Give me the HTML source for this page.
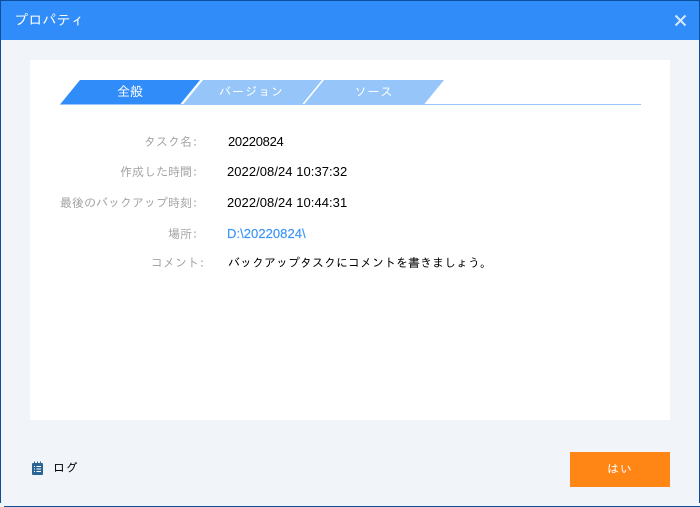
<!DOCTYPE html>
<html lang="ja">
<head>
<meta charset="utf-8">
<style>
html,body{margin:0;padding:0;width:700px;height:507px;overflow:hidden;background:#f1f5fa}
body{position:relative;font-family:"Liberation Sans","IPAGothic",sans-serif}
div,svg{position:absolute}
.t{white-space:nowrap;line-height:16px;height:16px}
.l{color:#a3a3a3;font-size:12px;text-align:right;width:190px;left:8px;font-family:"IPAGothic","Liberation Sans",sans-serif}
.v{color:#000;font-size:13px;left:227px;letter-spacing:.05px}
.j{font-family:"IPAGothic","Liberation Sans",sans-serif;font-size:12px}
</style>
</head>
<body>
<div style="left:0;top:0;width:700px;height:1px;background:#0b4f9c"></div>
<div style="left:0;top:0;width:1px;height:503px;background:#0b4f9c"></div>
<div style="left:699px;top:0;width:1px;height:503px;background:#0b4f9c"></div>
<div style="left:4px;top:506px;width:696px;height:1px;background:#0b4f9c"></div>
<div style="left:1px;top:1px;width:698px;height:39px;background:#308cf9"></div>
<div class="t j" style="left:14px;top:12px;font-size:14px;color:#fff;line-height:16px;letter-spacing:.2px">プロパティ</div>
<svg style="left:674px;top:14px" width="13" height="13" viewBox="0 0 13 13"><path d="M1.5 1.5L11.5 11.5M11.5 1.5L1.5 11.5" stroke="#d6e8fd" stroke-width="2" fill="none"/></svg>

<div style="left:30px;top:60px;width:640px;height:360px;background:#fff"></div>

<svg style="left:0;top:0" width="700" height="120">
<polygon points="60,104.5 80,80 200,80 180,104.5" fill="#308cf9"/>
<polygon points="183,104.5 203,80 322,80 302,104.5" fill="#96c5fa"/>
<polygon points="304,104.5 324,80 444,80 424,104.5" fill="#96c5fa"/>
<rect x="60" y="104" width="581" height="1" fill="#96c5fa"/>
</svg>
<div class="t j" style="left:60px;width:140px;top:84px;text-align:center;color:#fff;font-size:13px">全般</div>
<div class="t j" style="left:182px;width:139px;top:84px;text-align:center;color:#fff;letter-spacing:1px">バージョン</div>
<div class="t j" style="left:304px;width:140px;top:84px;text-align:center;color:#fff;letter-spacing:1px">ソース</div>

<div class="t l" style="top:134px">タスク名:</div>
<div class="t l" style="top:164px">作成した時間:</div>
<div class="t l" style="top:195px">最後のバックアップ時刻:</div>
<div class="t l" style="top:226px">場所:</div>
<div class="t l" style="top:255px;left:15px">コメント:</div>

<div class="t v" style="top:134px;left:228px;letter-spacing:-.3px">20220824</div>
<div class="t v" style="top:164px">2022/08/24 10:37:32</div>
<div class="t v" style="top:195px">2022/08/24 10:44:31</div>
<div class="t v" style="top:226px;color:#3f96f8;-webkit-text-stroke:.2px #3f96f8">D:\20220824\</div>
<div class="t j" style="top:255px;left:228px;color:#000">バックアップタスクにコメントを書きましょう。</div>

<svg style="left:31px;top:461px" width="13" height="15" viewBox="0 0 13 15">
<rect x="1" y="2" width="11" height="12" rx="1" fill="#2c6496"/>
<path d="M3.5 0.5V3M6.5 0.5V3M9.5 0.5V3" stroke="#2c6496" stroke-width="1" fill="none"/>
<path d="M3 5.5H4M5.5 5.5H10M3 8H4M5.5 8H10M3 10.5H4M5.5 10.5H10" stroke="#fff" stroke-width="1" fill="none"/>
</svg>
<div class="t j" style="left:53px;top:460px;color:#000;letter-spacing:.5px">ログ</div>

<div style="left:570px;top:452px;width:100px;height:35px;background:#ff8515"></div>
<div class="t j" style="left:570px;width:100px;top:461px;text-align:center;color:#fff;letter-spacing:1px">はい</div>
</body>
</html>
